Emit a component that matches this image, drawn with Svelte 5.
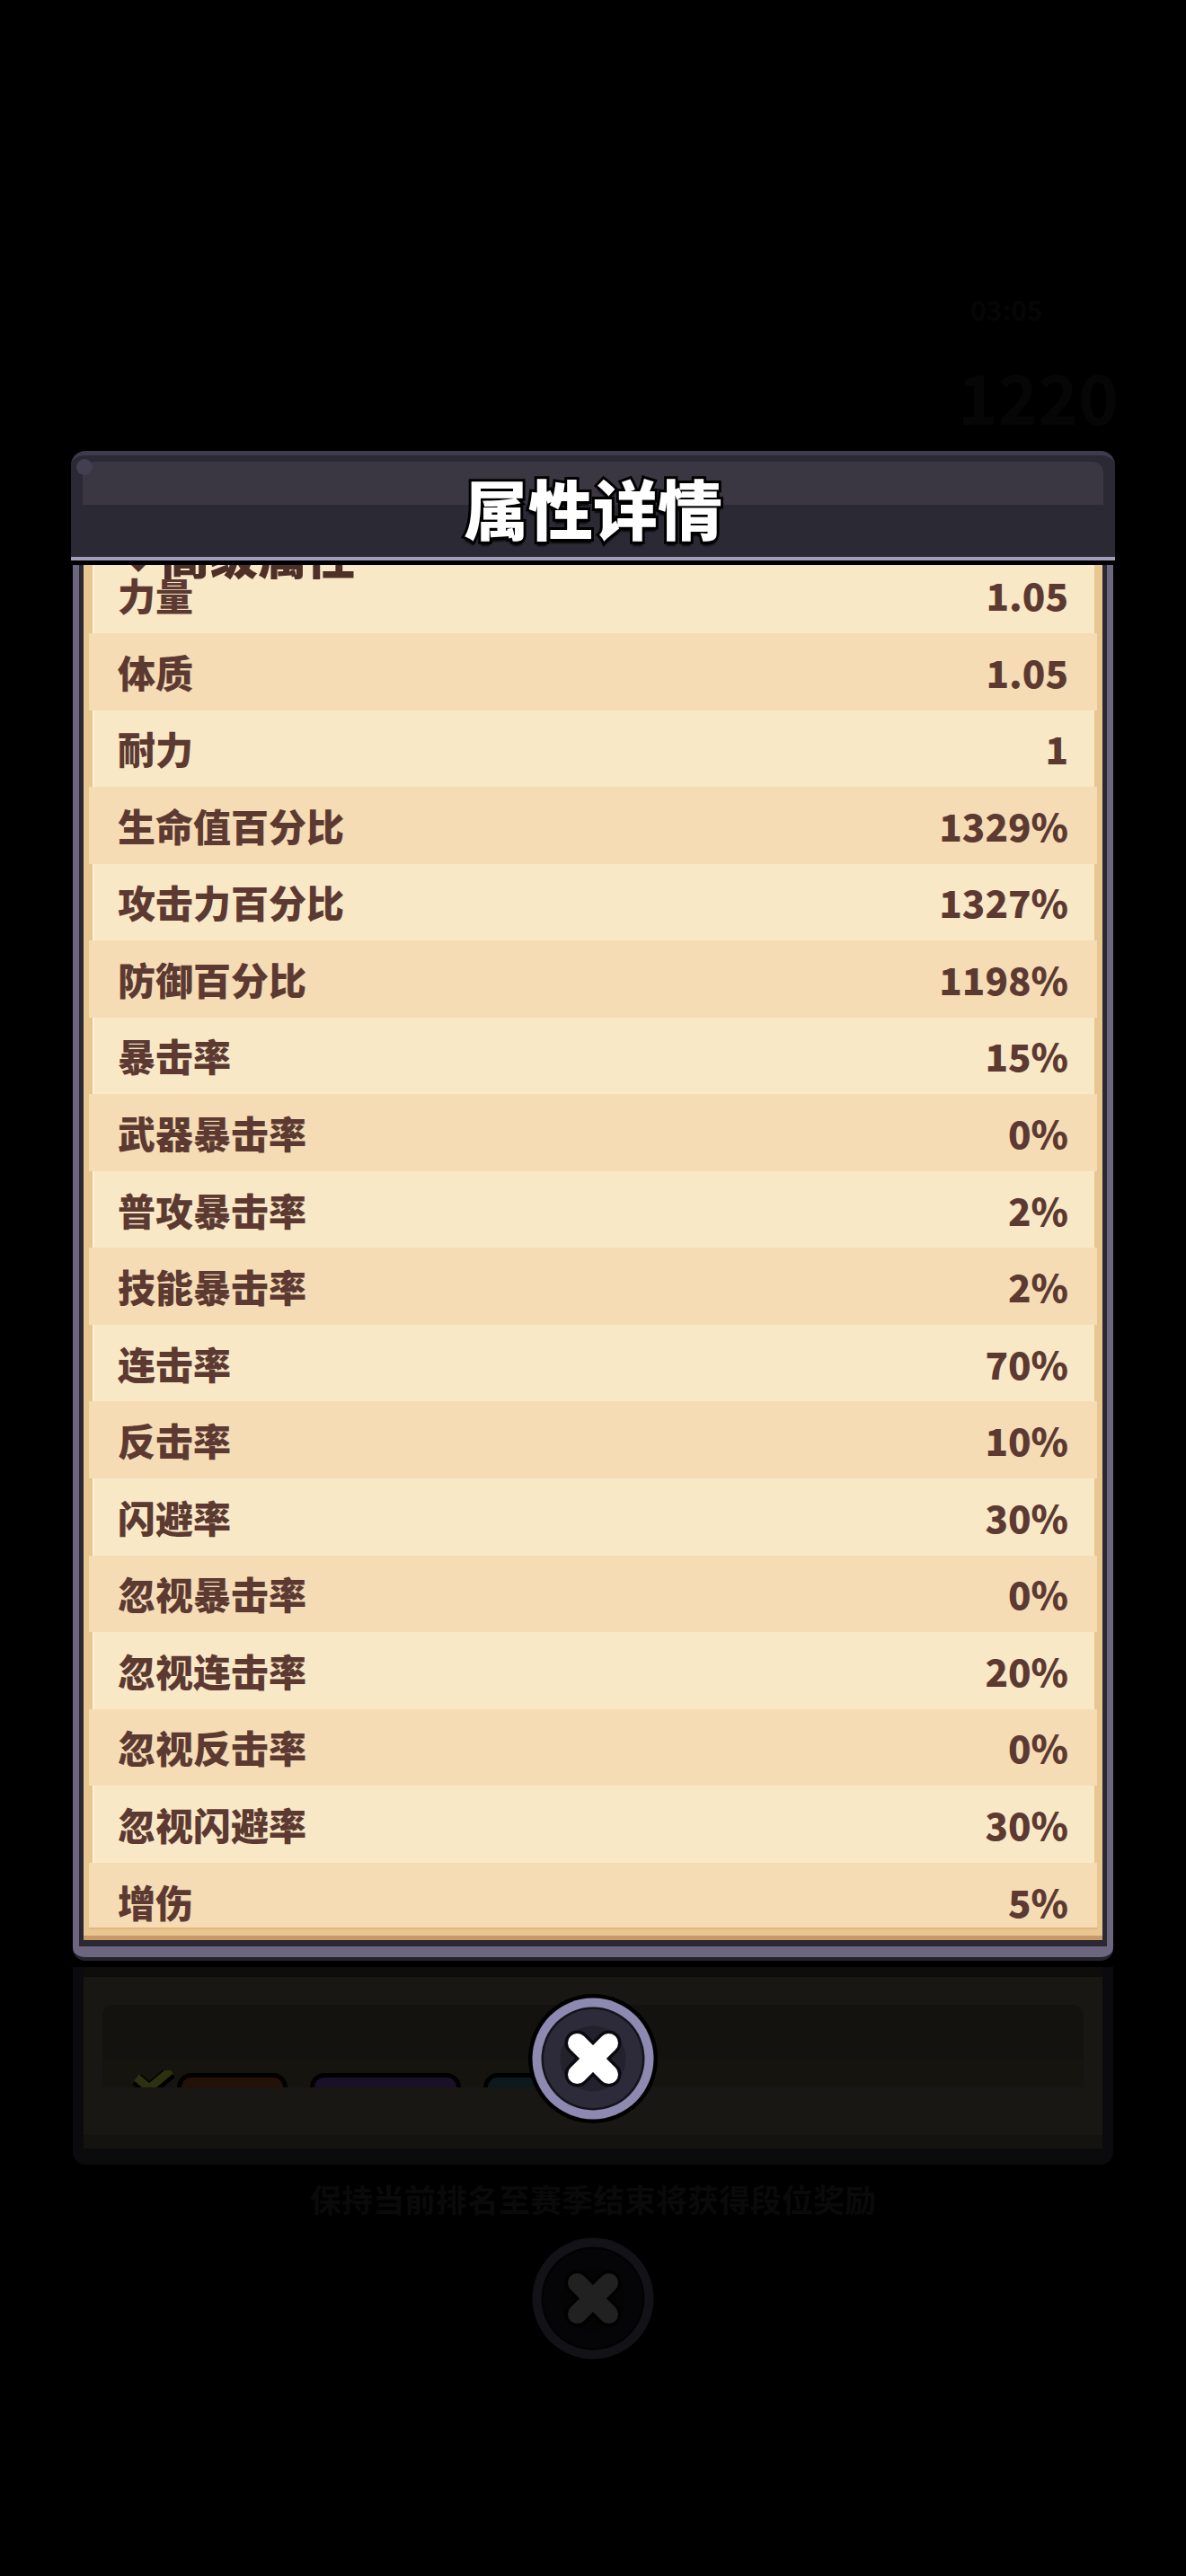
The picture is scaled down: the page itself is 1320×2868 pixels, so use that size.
<script lang="ts">
  const rows = [
    ['力量', '1.05'],
    ['体质', '1.05'],
    ['耐力', '1'],
    ['生命值百分比', '1329%'],
    ['攻击力百分比', '1327%'],
    ['防御百分比', '1198%'],
    ['暴击率', '15%'],
    ['武器暴击率', '0%'],
    ['普攻暴击率', '2%'],
    ['技能暴击率', '2%'],
    ['连击率', '70%'],
    ['反击率', '10%'],
    ['闪避率', '30%'],
    ['忽视暴击率', '0%'],
    ['忽视连击率', '20%'],
    ['忽视反击率', '0%'],
    ['忽视闪避率', '30%'],
    ['增伤', '5%']
  ];
</script>

{#snippet closeIcon()}
  <svg viewBox="0 0 144 144" width="144" height="144">
    <circle cx="72" cy="72" r="72" fill="#000" />
    <circle cx="72" cy="72" r="67.5" fill="#8d89b0" />
    <circle cx="72" cy="72" r="57.5" fill="#14131a" />
    <circle cx="72" cy="72" r="55" fill="#2d2b39" />
    <circle cx="72" cy="72" r="36.5" fill="#23212c" />
    <path d="M54.5 54.5 89.5 89.5M89.5 54.5 54.5 89.5" stroke="#0b0a10" stroke-width="28" stroke-linecap="round" />
    <path d="M54.5 54.5 89.5 89.5M89.5 54.5 54.5 89.5" stroke="#fff" stroke-width="21" stroke-linecap="round" />
  </svg>
{/snippet}

<div class="page">
  <div class="top">
    <span class="ghost timer">03:05</span>
    <span class="ghost score">1220</span>
  </div>

  <div class="sheet">
    <header class="title">
      <div class="sheen"></div>
      <div class="dot"></div>
      <h1>属性详情</h1>
    </header>

    <div class="frame">
      <div class="frame-in">
        <div class="paper">
          <div class="scroll">
            <div class="head"><h3><span class="mark">◆</span>高级属性</h3></div>
            {#each rows as [label, value]}
              <div class="row">
                <span>{label}</span>
                <span>{value}</span>
              </div>
            {/each}
          </div>
        </div>
      </div>
    </div>

    <div class="under">
      <div class="u-top"></div>
      <div class="u-body">
        <div class="u-block"></div>
        <div class="u-tiles">
          <div class="tile brown">
            <svg class="check" viewBox="0 0 56 30" width="56" height="30">
              <path d="M6 10 20 22 44 2" fill="none" stroke="#000" stroke-width="15" />
              <path d="M6 8 20 20 44 0" fill="none" stroke="#2c3110" stroke-width="9" />
            </svg>
          </div>
          <div class="tile purple"></div>
          <div class="tile teal"></div>
        </div>
      </div>
      <div class="u-foot"></div>
      <button class="close" aria-label="关闭">{@render closeIcon()}</button>
    </div>

    <p class="ghost-text">保持当前排名至赛季结束将获得段位奖励</p>
    <div class="ghost-close">{@render closeIcon()}</div>
  </div>
</div>

<style>
  :global(body) { margin: 0; background: #000; }

  .page {
    height: 2868px;
    overflow: hidden;
    background: #000;
    font-family: "Noto Sans CJK SC", "Noto Sans", sans-serif;
    color: #5c3a32;
  }

  .top { height: 502px; display: flex; justify-content: flex-end; align-items: flex-end; gap: 0; position: relative; }
  .ghost { color: #060606; font-weight: 700; }
  .timer { font-size: 30px; position: absolute; left: 1080px; top: 322px; }
  .score { font-size: 76px; line-height: 1; margin: 0 75px 24px 0; }

  .sheet { width: 1162px; margin: 0 auto; }

  .title {
    position: relative;
    height: 113px;
    border-top: 5px solid #3e3b4e;
    border-bottom: 4px solid #a39cba;
    border-radius: 16px 16px 0 0;
    background: #2b2933;
    display: flex;
    align-items: center;
    justify-content: center;
  }
  .sheen {
    position: absolute;
    left: 13px;
    right: 13px;
    top: 7px;
    height: 48px;
    background: #3a3642;
    border-radius: 12px 12px 0 0;
  }
  .dot {
    position: absolute;
    left: 6px;
    top: 4px;
    width: 18px;
    height: 18px;
    border-radius: 50%;
    background: #423f50;
  }
  h1 {
    position: relative;
    margin: 0;
    font-size: 72px;
    font-weight: 900;
    line-height: 1;
    color: #fff;
    -webkit-text-stroke: 6px #000;
    paint-order: stroke fill;
    text-shadow: 0 3px 0 #000, 0 5px 2px rgba(0, 0, 0, .8);
  }

  .frame {
    margin: 5px 2px 0;
    padding: 0 7px 12px;
    background: #6c677f;
    border-bottom: 4px solid #25232e;
    border-radius: 0 0 14px 14px;
  }
  .frame-in { border: solid #2a2833; border-width: 0 5px 7px; }
  .paper {
    background: #e8c68f;
    border-bottom: 5px solid #c99a68;
    padding: 0 6px 7px;
  }
  .scroll {
    height: 1517px;
    overflow: hidden;
    border-bottom: 2px solid #e3b67c;
    font-size: 42px;
    font-weight: 900;
  }

  .head {
    height: 29.44px;
    background: #f9e8c6;
    background-clip: padding-box;
    border: solid transparent;
    border-width: 0 3px 0 4px;
    box-shadow: inset 2px 0 0 #fdf2d8;
    box-sizing: border-box;
    padding: 0 29px 0 28px;
  }
  h3 {
    margin: -39px 0 0;
    font-size: 54px;
    font-weight: 900;
    line-height: 54px;
    padding-bottom: 10px;
    border-bottom: 5px solid #eac795;
    color: #4f3028;
    white-space: nowrap;
  }
  .mark { font-size: 22px; margin: 0 14px 0 12px; vertical-align: 6px; }

  .row {
    height: 85.56px;
    box-sizing: border-box;
    padding: 0 32px;
    background: #f5dcb5;
    display: flex;
    align-items: center;
    justify-content: space-between;
    line-height: 1;
  }
  .row:nth-child(even) {
    background: #f9e8c6;
    background-clip: padding-box;
    border: solid transparent;
    border-width: 0 3px 0 4px;
    box-shadow: inset 2px 0 0 #fdf2d8;
    padding: 0 29px 0 28px;
  }

  .under {
    position: relative;
    margin: 7px 2px 0;
    padding: 0 12px 18px;
    background: #0b0b0e;
    border-radius: 0 0 14px 14px;
  }
  .u-top { height: 11px; background: #0e0d0b; }
  .u-body { padding: 31px 21px 53px; background: #181713; }
  .u-block { height: 61px; background: #14120e; border-radius: 12px 12px 0 0; }
  .u-tiles {
    height: 31px;
    overflow: hidden;
    background: #16140f;
    display: flex;
    gap: 25px;
    padding: 15px 0 0 83px;
    box-sizing: border-box;
  }
  .u-foot { height: 15px; background: #15130f; }

  .tile {
    position: relative;
    height: 60px;
    flex: none;
    box-sizing: border-box;
    border: 5px solid #000;
    border-radius: 16px;
  }
  .brown { width: 123px; background: #241107; }
  .purple { width: 168px; background: #1a1028; }
  .teal { width: 100px; background: #0c1a1e; }
  .check { position: absolute; left: -56px; top: -8px; }

  .close {
    position: absolute;
    left: 50%;
    top: 30px;
    width: 144px;
    height: 144px;
    margin: 0 0 0 -72px;
    padding: 0;
    border: 0;
    background: none;
  }
  .close svg, .ghost-close svg { display: block; }

  .ghost-text {
    margin: 23px 0 0;
    height: 30px;
    line-height: 30px;
    font-size: 35px;
    font-weight: 700;
    text-align: center;
    color: #0a0a0a;
    white-space: nowrap;
  }
  .ghost-close { width: 144px; margin: 24px auto 0; opacity: .13; }
</style>
